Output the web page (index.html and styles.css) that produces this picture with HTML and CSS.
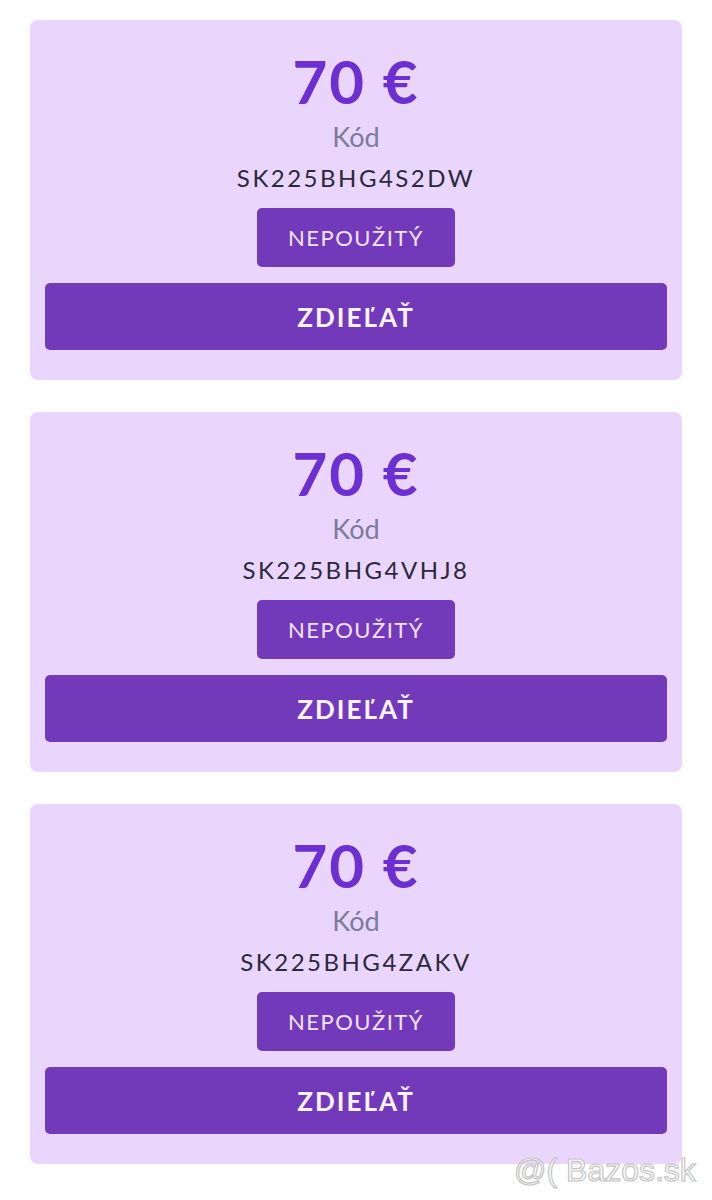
FILE: index.html
```html
<!DOCTYPE html>
<html lang="sk">

<head>
    <meta charset="UTF-8">
    <meta name="viewport" content="width=device-width, initial-scale=1.0">
    <title>Kupóny</title>
    <link rel="stylesheet" href="styles.css">
</head>

<body>
    <div class="voucher-list">
        <div class="voucher-card">
            <p class="voucher-value">70 €</p>
            <p class="voucher-label">Kód</p>
            <p class="voucher-code">SK225BHG4S2DW</p>
            <span class="voucher-status">Nepoužitý</span>
            <button class="voucher-share">Zdieľať</button>
        </div>
        <div class="voucher-card">
            <p class="voucher-value">70 €</p>
            <p class="voucher-label">Kód</p>
            <p class="voucher-code">SK225BHG4VHJ8</p>
            <span class="voucher-status">Nepoužitý</span>
            <button class="voucher-share">Zdieľať</button>
        </div>
        <div class="voucher-card">
            <p class="voucher-value">70 €</p>
            <p class="voucher-label">Kód</p>
            <p class="voucher-code">SK225BHG4ZAKV</p>
            <span class="voucher-status">Nepoužitý</span>
            <button class="voucher-share">Zdieľať</button>
        </div>
    </div>
    <div class="watermark">@( Bazos.sk</div>
</body>

</html>
```

FILE: styles.css
```css
body {
    margin: 0;
    background-color: #ffffff;
    font-family: Lato, "Noto Sans", sans-serif;
}

p {
    margin: 0px;
}

.voucher-list {
    display: flex;
    flex-direction: column;
    gap: 32px;
    padding: 20px 30px;
}

.voucher-card {
    background-color: #ead5fc;
    border-radius: 8px;
    padding: 24px 15px 30px;
    display: flex;
    flex-direction: column;
    align-items: center;
}

.voucher-value {
    font-size: 60px;
    font-weight: 700;
    line-height: 74px;
    color: #6c2fd3;
    letter-spacing: 2px;
}

.voucher-label {
    font-size: 27px;
    line-height: 38px;
    color: #7b7b9c;
}

.voucher-code {
    font-size: 24px;
    line-height: 44px;
    color: #2c293d;
    letter-spacing: 2.5px;
}

.voucher-status {
    margin-top: 8px;
    width: 198px;
    height: 59px;
    display: flex;
    align-items: center;
    justify-content: center;
    background-color: #7239bb;
    border-radius: 5px;
    color: #f3e3ff;
    font-size: 22px;
    letter-spacing: 1.5px;
    text-transform: uppercase;
}

.voucher-share {
    margin-top: 16px;
    width: 100%;
    height: 67px;
    border: 0;
    border-radius: 5px;
    background-color: #7239bb;
    color: #fbf4ff;
    font-family: Lato, "Noto Sans", sans-serif;
    font-size: 26px;
    font-weight: 700;
    letter-spacing: 2px;
    text-transform: uppercase;
    cursor: pointer;
}

.watermark {
    position: absolute;
    left: 514px;
    top: 1152px;
    font-family: "Liberation Sans", Arial, sans-serif;
    font-size: 32px;
    color: #ffffff;
    -webkit-text-stroke: 1.2px #c4c4c4;
}
```
